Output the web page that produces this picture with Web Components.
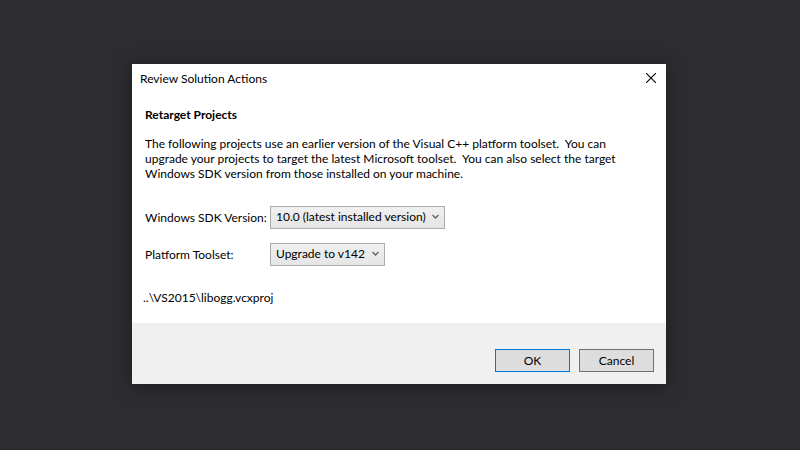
<!DOCTYPE html>
<html lang="en">
<head>
<meta charset="utf-8">
<title>Review Solution Actions</title>
<style>
  body { margin: 0; min-height: 100vh; box-sizing: border-box; border-bottom: 1px solid #32262f; background: #2d2d30; font: 12px/15px Lato, "Open Sans", sans-serif; color: #000; }
</style>
</head>
<body>
<dialog-stage>
  <dialog-window heading="Review Solution Actions">
    <retarget-panel heading="Retarget Projects">
      <span slot="intro">The following projects use an earlier version of the Visual C++ platform toolset.&nbsp; You can upgrade your projects to target the latest Microsoft toolset.&nbsp; You can also select the target Windows SDK version from those installed on your machine.</span>
      <select-field label="Windows SDK Version:" value="10.0 (latest installed version)"></select-field>
      <select-field label="Platform Toolset:" value="Upgrade to v142"></select-field>
      <span slot="projects">..\VS2015\libogg.vcxproj</span>
    </retarget-panel>
    <push-button slot="actions" primary>OK</push-button>
    <push-button slot="actions">Cancel</push-button>
  </dialog-window>
</dialog-stage>
<script>
class BaseElement extends HTMLElement {
  connectedCallback() {
    if (this.shadowRoot) return;
    this.attachShadow({ mode: "open" }).innerHTML = this.render();
  }
}

customElements.define("dialog-stage", class extends BaseElement {
  render() {
    return `<style>
      :host { display: block; padding: 64px 134px 65px 132px; }
    </style><slot></slot>`;
  }
});

customElements.define("dialog-window", class extends BaseElement {
  render() {
    return `<style>
      :host { display: block; background: #fff; box-shadow: 0 2px 16px rgba(0,0,0,.4); }
      header { display: flex; justify-content: space-between; align-items: center; height: 28px; padding: 0 8px; }
      h1 { margin: 0; font: inherit; }
      .close { display: flex; padding: 2px; border: 0; background: none; }
      svg { display: block; }
      footer { display: flex; justify-content: flex-end; gap: 9px; padding: 26px 12px 12px; background: #f0f0f0; }
    </style>
    <section role="dialog" aria-labelledby="title">
      <header>
        <h1 id="title">${this.getAttribute("heading")}</h1>
        <button class="close" aria-label="Close">
          <svg width="10" height="10" viewBox="0 0 10 10"><path d="M0 0L10 10M10 0L0 10" stroke="#000" stroke-width="1.1"/></svg>
        </button>
      </header>
      <main><slot></slot></main>
      <footer><slot name="actions"></slot></footer>
    </section>`;
  }
});

customElements.define("retarget-panel", class extends BaseElement {
  render() {
    return `<style>
      :host { display: block; padding: 15px 44px 18px 13px; }
      h2 { margin: 0 0 14px; font-size: 12px; line-height: 15px; font-weight: 700; }
      p { margin: 0 0 25px; }
      .fields { display: grid; gap: 14px; margin-bottom: 24px; }
      .projects { margin: 0 0 0 -2px; }
    </style>
    <h2>${this.getAttribute("heading")}</h2>
    <p><slot name="intro"></slot></p>
    <div class="fields"><slot></slot></div>
    <p class="projects"><slot name="projects"></slot></p>`;
  }
});

customElements.define("select-field", class extends BaseElement {
  render() {
    return `<style>
      :host { display: grid; grid-template-columns: 125px 1fr; align-items: center; }
      label { white-space: nowrap; }
      .box { position: relative; justify-self: start; }
      select { display: block; appearance: none; height: 23px; margin: 0; padding: 0 18px 2px 5px; border: 1px solid #acacac; border-radius: 0;
        background: linear-gradient(#f0f0f0, #e5e5e5); font: inherit; color: inherit; }
      svg { position: absolute; right: 6px; top: 8px; pointer-events: none; }
    </style>
    <label for="choice">${this.getAttribute("label")}</label>
    <div class="box">
      <select id="choice"><option>${this.getAttribute("value")}</option></select>
      <svg width="7" height="6" viewBox="0 0 7 6"><path d="M.5 1L3.5 4L6.5 1" fill="none" stroke="#606060" stroke-width="1.3"/></svg>
    </div>`;
  }
});

customElements.define("push-button", class extends BaseElement {
  render() {
    return `<style>
      :host { display: block; }
      button { display: block; min-width: 75px; height: 23px; padding: 0 8px; border: 1px solid #707070; border-radius: 0; background: #ddd; font: inherit; color: inherit; }
      :host([primary]) button { border-color: #0078d7; }
    </style><button><slot></slot></button>`;
  }
});
</script>
</body>
</html>
